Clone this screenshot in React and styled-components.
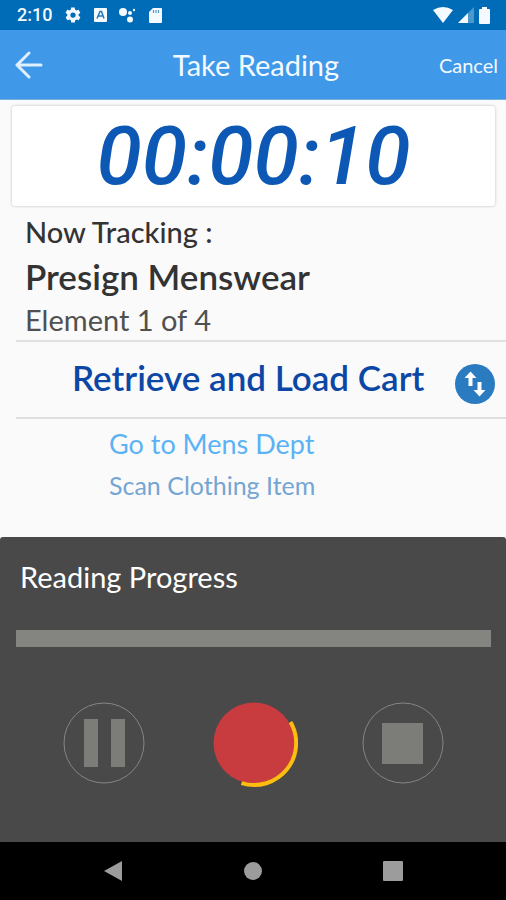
import React from "react";
import styled, { createGlobalStyle } from "styled-components";

const GlobalStyle = createGlobalStyle`
  * { box-sizing: border-box; }
  body { margin: 0; background: #fafafa; font-family: Lato, "Liberation Sans", sans-serif; }
  button { font: inherit; color: inherit; background: none; border: 0; padding: 0; cursor: pointer; }
  svg { display: block; }
  h1, h2, p { margin: 0; }
`;

const Screen = styled.div`
  min-height: 100vh;
  display: flex;
  flex-direction: column;
  background: #fafafa;
`;

const StatusBar = styled.div`
  height: 30px;
  padding: 0 16px 0 17px;
  display: flex;
  align-items: center;
  justify-content: space-between;
  background: #006bb6;
  color: #f4faff;
`;

const StatusGroup = styled.div`
  display: flex;
  align-items: center;
  gap: ${(p) => p.$gap}px;
`;

const Clock = styled.time`
  font: 500 18px/30px Roboto, sans-serif;
`;

const AppBar = styled.header`
  height: 70px;
  padding: 0 8px 0 14px;
  display: grid;
  grid-template-columns: 1fr auto 1fr;
  align-items: center;
  background: #3f98e8;
  border-bottom: 1px solid #78aedb;
  color: #f4faff;
`;

const BackButton = styled.button`
  justify-self: start;
`;

const Title = styled.h1`
  font-size: 29px;
  line-height: 36px;
  font-weight: 400;
`;

const CancelButton = styled.button`
  justify-self: end;
  && { font-size: 20px; line-height: 28px; }
`;

const TimerCard = styled.div`
  height: 100px;
  margin: 6px 11px 0 12px;
  display: flex;
  align-items: center;
  justify-content: center;
  background: #fff;
  border-radius: 3px;
  box-shadow: 0 0 3px rgba(0, 0, 0, 0.25);
`;

const Timer = styled.time`
  font: italic 500 82px/100px Roboto, sans-serif;
  color: #0d58b5;
`;

const Tracking = styled.section`
  margin-left: 16px;
  padding: 8px 9px 0;
  height: 136px;
  border-bottom: 2px solid #e0e0e0;
`;

const TrackingLabel = styled.p`
  font-size: 29px;
  line-height: 36px;
  font-weight: 500;
  color: #333;
`;

const TrackingName = styled.h2`
  font-size: 35px;
  line-height: 52px;
  font-weight: 600;
  color: #333;
`;

const TrackingStep = styled.p`
  font-size: 29px;
  line-height: 36px;
  font-weight: 400;
  color: #505050;
`;

const CurrentTask = styled.section`
  height: 77px;
  margin-left: 16px;
  padding: 0 11px 0 56px;
  display: flex;
  align-items: center;
  justify-content: space-between;
  border-bottom: 2px solid #e0e0e0;
`;

const TaskName = styled.h2`
  padding-bottom: 6px;
  font-size: 35px;
  line-height: 44px;
  font-weight: 600;
  color: #0c47a6;
`;

const SwapButton = styled.button`
  margin-top: 9px;
`;

const Upcoming = styled.ul`
  margin: 0;
  padding: 7px 0 24px 109px;
  list-style: none;
  flex: 1 0 auto;
`;

const UpcomingTask = styled.li`
  font-size: ${(p) => (p.$next ? 27 : 25)}px;
  line-height: ${(p) => (p.$next ? 36 : 46)}px;
  color: ${(p) => (p.$next ? "#5bb2f5" : "#74a5d3")};
`;

const Panel = styled.section`
  height: 305px;
  padding: 20px 15px 0 16px;
  background: #494949;
  border-radius: 3px 3px 0 0;
  color: #fff;
`;

const PanelTitle = styled.label`
  display: block;
  padding-left: 4px;
  font-size: 29px;
  line-height: 40px;
`;

const ProgressBar = styled.progress`
  appearance: none;
  display: block;
  width: 100%;
  height: 17px;
  margin-top: 33px;
  border: 0;
  background: #848480;
  &::-webkit-progress-bar { background: #848480; }
  &::-webkit-progress-value { background: #fdbe0f; }
`;

const Controls = styled.div`
  display: flex;
  justify-content: space-between;
  padding: 55px 47px 0;
`;

const NavBar = styled.nav`
  height: 58px;
  display: flex;
  align-items: center;
  justify-content: center;
  gap: 120px;
  background: #000;
`;

const GearIcon = () => (
  <svg width="18" height="18" viewBox="0 0 24 24" fill="currentColor">
    <path d="M19.4 13c.1-.3.1-.6.1-1s0-.7-.1-1l2.1-1.6c.2-.2.2-.4.1-.6l-2-3.5c-.1-.2-.4-.3-.6-.2l-2.5 1c-.5-.4-1.1-.7-1.7-1l-.4-2.6c0-.3-.2-.5-.5-.5h-4c-.3 0-.5.2-.5.5L9 5.100c-.6.3-1.200.6-1.700 1l-2.500-1c-.2-.1-.5 0-.6.2l-2 3.500c-.1.2-.1.4.1.6L4.500 11c0 .3-.1.600-.1 1s0 .700.1 1l-2.100 1.600c-.2.2-.2.400-.1.600l2 3.500c.1.200.4.300.6.200l2.500-1c.5.400 1.100.700 1.700 1l.4 2.600c0 .3.2.500.5.500h4c.3 0 .5-.2.5-.5l.4-2.600c.6-.3 1.200-.6 1.700-1l2.500 1c.2.1.5 0 .6-.2l2-3.500c.1-.2.1-.4-.1-.6zM12 15.500a3.500 3.500 0 1 1 0-7 3.500 3.500 0 0 1 0 7z" />
  </svg>
);

const KeyboardIcon = () => (
  <svg width="13" height="14" viewBox="0 0 13 14">
    <rect width="13" height="14" rx="1" fill="currentColor" />
    <path d="M3 10.500 L6 3.500 H7.500 L10 10.500 M4.500 8 H9" fill="none" stroke="#2776b5" strokeWidth="1.500" />
  </svg>
);

const AssistantIcon = () => (
  <svg width="17" height="16" viewBox="0 0 17 16" fill="currentColor">
    <circle cx="4" cy="5" r="4" />
    <circle cx="11" cy="6" r="2" />
    <circle cx="11" cy="12.500" r="3" />
    <circle cx="15" cy="3" r="1.200" />
  </svg>
);

const CardIcon = () => (
  <svg width="15" height="17" viewBox="0 0 15 17">
    <path d="M5 1 H13 Q14 1 14 2 V15 Q14 16 13 16 H2 Q1 16 1 15 V5 Z" fill="currentColor" />
    <path d="M5.500 3 V6 M8 3 V6 M10.500 3 V6" stroke="#5798ca" strokeWidth="1.200" />
  </svg>
);

const WifiIcon = () => (
  <svg width="20" height="16" viewBox="0 0 20 16" fill="currentColor">
    <path d="M0 3 Q10 -3 20 3 L10 16 Z" />
  </svg>
);

const SignalIcon = () => (
  <svg width="16" height="16" viewBox="0 0 16 16">
    <path d="M0 16 L16 0 V16 Z" fill="#4c97cc" />
    <path d="M0 16 L10 6 V16 Z" fill="currentColor" />
  </svg>
);

const BatteryIcon = () => (
  <svg width="11" height="17" viewBox="0 0 11 17" fill="currentColor">
    <path d="M3 2 V0 H8 V2 H10 Q11 2 11 3 V16 Q11 17 10 17 H1 Q0 17 0 16 V3 Q0 2 1 2 Z" />
  </svg>
);

const BackArrow = () => (
  <svg width="30" height="28" viewBox="0 0 30 28" fill="none" stroke="#def0ff" strokeWidth="3">
    <path d="M15 2 L3 14 L15 26 M3 14 H27" strokeLinecap="round" strokeLinejoin="round" />
  </svg>
);

const SwapIcon = () => (
  <svg width="40" height="40" viewBox="0 0 40 40">
    <circle cx="20" cy="20" r="20" fill="#2b7bc0" />
    <path d="M9.500 14 L15.500 7.500 L21.500 14 H17.500 V22 H13.500 V14 Z" fill="#fff" />
    <path d="M18.500 26 L24.500 32.500 L30.500 26 H26.500 V18 H22.500 V26 Z" fill="#fff" />
  </svg>
);

const PauseIcon = () => (
  <svg width="82" height="86" viewBox="0 0 82 86">
    <circle cx="41" cy="41" r="40" fill="none" stroke="#858583" />
    <path d="M21 17 H35 V65 H21 Z M48 17 H62 V65 H48 Z" fill="#7c7c79" />
  </svg>
);

const RecordIcon = () => (
  <svg width="88" height="86" viewBox="0 0 88 86">
    <circle cx="44" cy="41" r="40.500" fill="#c83b3e" />
    <path d="M80.500 20 A42 42 0 0 1 31.500 81.100" fill="none" stroke="#fdbe0f" strokeWidth="4" />
  </svg>
);

const StopIcon = () => (
  <svg width="82" height="86" viewBox="0 0 82 86">
    <circle cx="41" cy="41" r="40" fill="none" stroke="#858583" />
    <rect x="20" y="21" width="41" height="41" fill="#7c7c79" />
  </svg>
);

export default function App() {
  return (
    <Screen>
      <GlobalStyle />
      <StatusBar>
        <StatusGroup $gap={12}>
          <Clock>2:10</Clock>
          <GearIcon />
          <KeyboardIcon />
          <AssistantIcon />
          <CardIcon />
        </StatusGroup>
        <StatusGroup $gap={5}>
          <WifiIcon />
          <SignalIcon />
          <BatteryIcon />
        </StatusGroup>
      </StatusBar>
      <AppBar>
        <BackButton aria-label="Back"><BackArrow /></BackButton>
        <Title>Take Reading</Title>
        <CancelButton>Cancel</CancelButton>
      </AppBar>
      <TimerCard>
        <Timer>00:00:10</Timer>
      </TimerCard>
      <Tracking>
        <TrackingLabel>Now Tracking :</TrackingLabel>
        <TrackingName>Presign Menswear</TrackingName>
        <TrackingStep>Element 1 of 4</TrackingStep>
      </Tracking>
      <CurrentTask>
        <TaskName>Retrieve and Load Cart</TaskName>
        <SwapButton aria-label="Change element"><SwapIcon /></SwapButton>
      </CurrentTask>
      <Upcoming>
        <UpcomingTask $next>Go to Mens Dept</UpcomingTask>
        <UpcomingTask>Scan Clothing Item</UpcomingTask>
      </Upcoming>
      <Panel>
        <PanelTitle htmlFor="reading-progress">Reading Progress</PanelTitle>
        <ProgressBar id="reading-progress" value="0" max="4" />
        <Controls>
          <button aria-label="Pause"><PauseIcon /></button>
          <button aria-label="Record"><RecordIcon /></button>
          <button aria-label="Stop"><StopIcon /></button>
        </Controls>
      </Panel>
      <NavBar>
        <button aria-label="System back">
          <svg width="20" height="22" viewBox="0 0 20 22"><path d="M1 11 L19 1 V21 Z" fill="#9c9c9c" /></svg>
        </button>
        <button aria-label="Home">
          <svg width="20" height="20" viewBox="0 0 20 20"><circle cx="10" cy="10" r="9" fill="#9c9c9c" /></svg>
        </button>
        <button aria-label="Recent apps">
          <svg width="20" height="20" viewBox="0 0 20 20"><rect width="20" height="20" rx="1" fill="#9c9c9c" /></svg>
        </button>
      </NavBar>
    </Screen>
  );
}
